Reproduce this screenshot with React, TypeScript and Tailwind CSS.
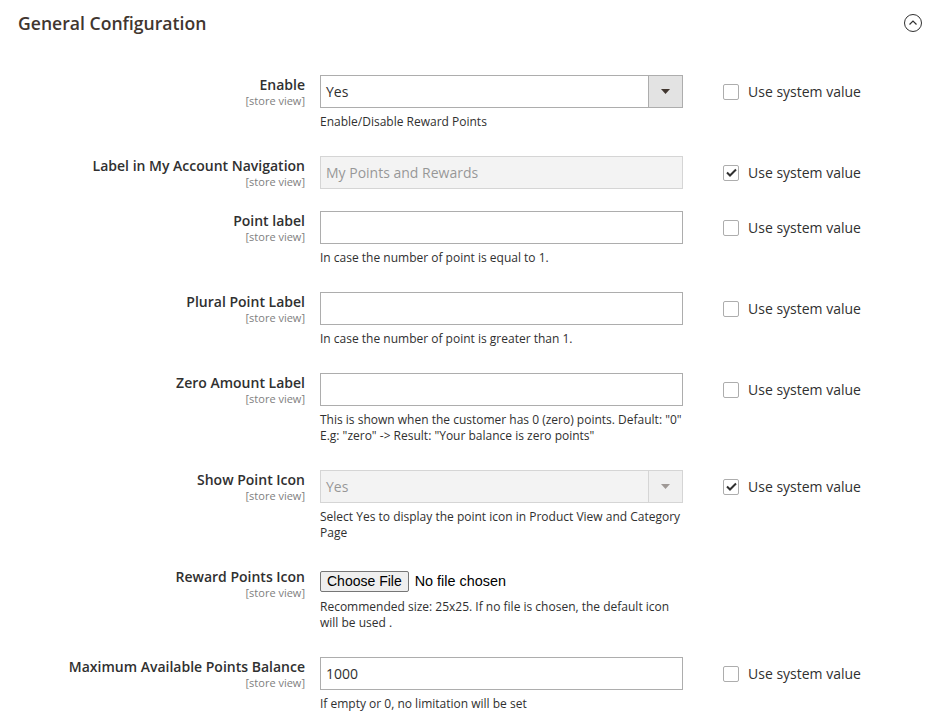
import React from "react";

type Field = {
  label: string;
  control: "select" | "input" | "file";
  value?: string;
  disabled?: boolean;
  note?: React.ReactNode;
  system?: boolean; // undefined = no "Use system value" box
};

const fields: Field[] = [
  { label: "Enable", control: "select", value: "Yes", note: "Enable/Disable Reward Points", system: false },
  { label: "Label in My Account Navigation", control: "input", value: "My Points and Rewards", disabled: true, system: true },
  { label: "Point label", control: "input", note: "In case the number of point is equal to 1.", system: false },
  { label: "Plural Point Label", control: "input", note: "In case the number of point is greater than 1.", system: false },
  {
    label: "Zero Amount Label",
    control: "input",
    note: (
      <>
        This is shown when the customer has 0 (zero) points. Default: "0"
        <br />
        E.g: "zero" -&gt; Result: "Your balance is zero points"
      </>
    ),
    system: false,
  },
  {
    label: "Show Point Icon",
    control: "select",
    value: "Yes",
    disabled: true,
    note: "Select Yes to display the point icon in Product View and Category Page",
    system: true,
  },
  {
    label: "Reward Points Icon",
    control: "file",
    note: "Recommended size: 25x25. If no file is chosen, the default icon will be used .",
  },
  {
    label: "Maximum Available Points Balance",
    control: "input",
    value: "1000",
    note: "If empty or 0, no limitation will be set",
    system: false,
  },
];

const Control: React.FC<{ field: Field }> = ({ field }) => {
  if (field.control === "file") {
    return (
      <div className="h-[26px] pt-[4px] flex items-start font-['Liberation_Sans',Arial,sans-serif] text-black">
        <span className="h-[21px] px-[6px] flex items-center border border-[#767676] bg-[#efefef] rounded-[2px] text-[14px]">
          Choose File
        </span>
        <span className="ml-[6px] h-[21px] flex items-center text-[14.4px]">No file chosen</span>
      </div>
    );
  }
  const box = `h-[33px] w-full flex items-stretch border border-[#adadad] text-[14px] ${
    field.disabled ? "bg-[#e9e9e9] opacity-50" : "bg-white"
  }`;
  if (field.control === "select") {
    return (
      <div className={box}>
        <div className="flex-1 flex items-center px-[5px] text-[#303030]">{field.value}</div>
        <div className="w-[34px] flex items-center justify-center border-l border-[#adadad] bg-[#e3e3e3]">
          <svg width="9" height="5" viewBox="0 0 9 5">
            <polygon points="0,0 9,0 4.5,5" fill="#41362f" />
          </svg>
        </div>
      </div>
    );
  }
  return (
    <div className={box}>
      <div className="flex-1 flex items-center px-[5px] text-[#303030]">{field.value}</div>
    </div>
  );
};

const SystemValue: React.FC<{ checked: boolean }> = ({ checked }) => (
  <div className="ml-[40px] h-[33px] flex items-center gap-[9px] text-[14px] text-[#303030]">
    <span className="w-[16px] h-[16px] border border-[#adadad] rounded-[2px] bg-white flex items-center justify-center">
      {checked && (
        <svg width="11" height="9" viewBox="0 0 11 9">
          <polyline points="1,4.5 4,7.5 10,1.5" fill="none" stroke="#303030" strokeWidth="2" />
        </svg>
      )}
    </span>
    Use system value
  </div>
);

export default function App() {
  return (
    <div className="w-[931px] h-[718px] overflow-hidden bg-white px-[18px] font-['Open_Sans',sans-serif]">
      {/* section header */}
      <div className="h-[46px] flex items-center justify-between">
        <h2 className="text-[17.6px] font-semibold text-[#41362f]">General Configuration</h2>
        <svg width="20" height="20" viewBox="0 0 20 20" className="mr-[-10px]">
          <circle cx="10" cy="10" r="8.5" fill="none" stroke="#303030" strokeWidth="1" />
          <polyline points="6.5,11.5 10,8 13.5,11.5" fill="none" stroke="#303030" strokeWidth="1.2" />
        </svg>
      </div>

      {/* fields */}
      <div className="pt-[29px] flex flex-col gap-[22px]">
        {fields.map((field, idx) => (
          <div className="flex items-start" key={idx}>
            <div className="w-[287px] pt-[1px] text-right">
              <div className="text-[14px] leading-[18px] font-semibold text-[#303030] whitespace-nowrap">{field.label}</div>
              <div className="text-[11px] leading-[13px] text-[#808080]">[store view]</div>
            </div>
            <div className="ml-[15px] w-[363px]">
              <Control field={field} />
              {field.note && (
                <div className="mt-[6px] mb-[4px] text-[12px] leading-[16px] text-[#303030]">{field.note}</div>
              )}
            </div>
            {field.system !== undefined && <SystemValue checked={field.system} />}
          </div>
        ))}
      </div>
    </div>
  );
}
